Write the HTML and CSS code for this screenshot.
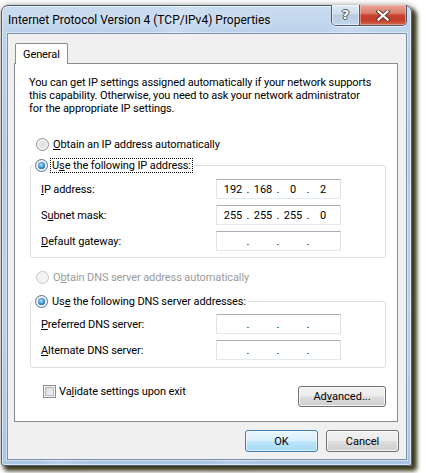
FILE: index.html
```html
<!DOCTYPE html>
<html>
<head>
<meta charset="utf-8">
<link rel="stylesheet" href="styles.css">
</head>
<body>
<div class="window">
  <div class="titlebar">
    <span class="title">Internet Protocol Version 4 (TCP/IPv4) Properties</span>
    <div class="caption-buttons">
      <div class="cbtn help"><span class="help-glyph">?</span></div>
      <div class="cbtn close">
        <svg width="14" height="11" viewBox="0 0 14 11">
          <path d="M2.5 1.5 L11.5 9.5 M11.5 1.5 L2.5 9.5" stroke="#5a3a3a" stroke-width="4" stroke-linecap="square" fill="none"/>
          <path d="M2.5 1.5 L11.5 9.5 M11.5 1.5 L2.5 9.5" stroke="#ffffff" stroke-width="2.2" stroke-linecap="square" fill="none"/>
        </svg>
      </div>
    </div>
  </div>
  <div class="client">
    <div class="tabs"><div class="tab">General</div></div>
    <div class="panel">
      <p class="intro">You can get IP settings assigned automatically if your network supports<br>this capability. Otherwise, you need to ask your network administrator<br>for the appropriate IP settings.</p>

      <div class="option row-obtain-ip"><span class="radio"></span><span><u>O</u>btain an IP address automatically</span></div>

      <fieldset class="group group-ip">
        <legend class="option"><span class="radio checked"></span><span class="focus">U<u>s</u>e the following IP address:</span></legend>
        <div class="field-row"><span class="label"><u>I</u>P address:</span>
          <div class="ip-input"><span class="octet">192</span><span class="dot">.</span><span class="octet">168</span><span class="dot">.</span><span class="octet">0</span><span class="dot">.</span><span class="octet">2</span></div>
        </div>
        <div class="field-row"><span class="label">S<u>u</u>bnet mask:</span>
          <div class="ip-input"><span class="octet">255</span><span class="dot">.</span><span class="octet">255</span><span class="dot">.</span><span class="octet">255</span><span class="dot">.</span><span class="octet">0</span></div>
        </div>
        <div class="field-row"><span class="label"><u>D</u>efault gateway:</span>
          <div class="ip-input"><span class="octet"></span><span class="dot">.</span><span class="octet"></span><span class="dot">.</span><span class="octet"></span><span class="dot">.</span><span class="octet"></span></div>
        </div>
      </fieldset>

      <div class="option disabled row-obtain-dns"><span class="radio disabled"></span><span>O<u>b</u>tain DNS server address automatically</span></div>

      <fieldset class="group group-dns">
        <legend class="option"><span class="radio checked"></span><span class="plain">Us<u>e</u> the following DNS server addresses:</span></legend>
        <div class="field-row"><span class="label"><u>P</u>referred DNS server:</span>
          <div class="ip-input"><span class="octet"></span><span class="dot">.</span><span class="octet"></span><span class="dot">.</span><span class="octet"></span><span class="dot">.</span><span class="octet"></span></div>
        </div>
        <div class="field-row"><span class="label"><u>A</u>lternate DNS server:</span>
          <div class="ip-input"><span class="octet"></span><span class="dot">.</span><span class="octet"></span><span class="dot">.</span><span class="octet"></span><span class="dot">.</span><span class="octet"></span></div>
        </div>
      </fieldset>

      <div class="bottom-row">
        <div class="check-option"><span class="checkbox"></span><span>Va<u>l</u>idate settings upon exit</span></div>
        <button class="btn btn-advanced">Ad<u>v</u>anced...</button>
      </div>
    </div>
    <div class="dialog-buttons">
      <button class="btn btn-default">OK</button>
      <button class="btn">Cancel</button>
    </div>
  </div>
</div>
</body>
</html>
```
FILE: styles.css
```css
* { box-sizing: border-box; }
html, body { margin: 0; padding: 0; background: #ffffff; }
body {
  width: 426px;
  height: 473px;
  overflow: hidden;
  font-family: Roboto, "Open Sans", sans-serif;
  font-size: 11px;
  line-height: 13px;
  letter-spacing: -0.1px;
  color: #000;
}
u { text-decoration: underline; text-decoration-thickness: 1px; text-underline-offset: 1px; }

.window {
  margin: 5px 0 0 1px;
  width: 411px;
  border: 1px solid #4d5d70;
  border-radius: 7px 7px 3px 3px;
  padding: 0 4px 5px 5px;
  background:
    linear-gradient(105deg, rgba(255,255,255,0) 30%, rgba(255,255,255,0.18) 34%, rgba(255,255,255,0) 40%, rgba(255,255,255,0) 62%, rgba(255,255,255,0.15) 66%, rgba(255,255,255,0) 72%),
    linear-gradient(to bottom, #cadcf0 0px, #bcd2eb 28px, #b0cae7 140px, #bad1ea 300px, #aac5e4 460px);
  box-shadow: inset 0 0 0 1px rgba(255,255,255,0.55), 4px 4px 4px 1px rgba(44,42,14,0.92), 0 0 6px rgba(0,0,0,0.35);
}

.titlebar {
  height: 27px;
  display: flex;
  align-items: flex-start;
  justify-content: space-between;
}
.title {
  padding: 8px 0 0 1px;
  font-size: 12px;
  letter-spacing: 0;
  white-space: nowrap;
  text-shadow: 0 0 6px rgba(255,255,255,0.8);
}
.caption-buttons {
  display: flex;
  margin-top: -1px;
  height: 21px;
  border: 1px solid #4b5a6c;
  border-top: none;
  border-radius: 0 0 5px 5px;
  overflow: hidden;
  box-shadow: 0 1px 0 rgba(255,255,255,0.6);
}
.cbtn {
  height: 20px;
  display: flex;
  align-items: center;
  justify-content: center;
}
.help {
  width: 28px;
  border-right: 1px solid #4b5a6c;
  background: linear-gradient(to bottom, #e3ebf5 0%, #cfdcec 45%, #b7cbe1 50%, #c3d5e9 100%);
  box-shadow: inset 0 0 0 1px rgba(255,255,255,0.5);
}
.help-glyph {
  font-family: "DejaVu Sans", sans-serif;
  font-weight: bold;
  font-size: 13px;
  line-height: 13px;
  letter-spacing: 0;
  color: #fff;
  margin-top: -1px;
  text-shadow: 0 0 1px #3b4a5c, 1px 0 0 #4d5c6e, -1px 0 0 #4d5c6e, 0 1px 0 #4d5c6e, 0 -1px 0 #4d5c6e;
}
.close {
  width: 46px;
  background: linear-gradient(to bottom, #e8a596 0%, #dc7f6c 40%, #c8442e 52%, #c23b25 75%, #d46b51 100%);
  box-shadow: inset 0 0 0 1px rgba(255,210,200,0.45);
}

.client {
  width: 400px;
  height: 427px;
  border: 1px solid #7b8fa8;
  background: #f0f0f0;
  display: flex;
  flex-direction: column;
  box-shadow: 0 0 0 1px rgba(255,255,255,0.45);
}

.tabs {
  padding: 9px 0 0 6px;
  display: flex;
}
.tab {
  position: relative;
  z-index: 1;
  margin-left: 1px;
  margin-bottom: -1px;
  width: 53px;
  height: 21px;
  border: 1px solid #898c95;
  border-bottom: none;
  border-radius: 2px 2px 0 0;
  background: #fff;
  padding: 4px 0 0 7px;
}

.panel {
  margin-left: 6px;
  width: 384px;
  height: 359px;
  border: 1px solid #898c95;
  background: #fff;
  padding: 0 11px 0 0;
}
.intro {
  margin: 12px 0 0 14px;
  white-space: nowrap;
}

.option {
  display: flex;
  align-items: center;
  height: 13px;
  white-space: nowrap;
}
.row-obtain-ip { margin: 23px 0 0 21px; }
.row-obtain-dns { margin: 13px 0 0 21px; }
.disabled { color: #9a9a9a; }

.radio {
  flex: none;
  position: relative;
  width: 13px;
  height: 13px;
  margin-right: 4px;
  border-radius: 50%;
  border: 1px solid #8f9091;
  background: radial-gradient(circle at 50% 50%, #dcdcdc 0%, #e9e9e9 45%, #f7f7f7 70%, #e3e3e3 100%);
}
.radio.checked { border-color: #546e8a; }
.radio.checked::after {
  content: "";
  position: absolute;
  left: 2px;
  top: 2px;
  width: 7px;
  height: 7px;
  border-radius: 50%;
  background: radial-gradient(circle at 45% 40%, #b9e6fd 0%, #5ab0e6 35%, #1f6aa6 70%, #0f3e69 100%);
}
.radio.disabled {
  border-color: #c8c8c8;
  background: #f3f3f3;
}

.group {
  margin: 8px 0 0 15px;
  padding: 7px 0 6px 10px;
  border: 1px solid #d5dfe5;
  border-radius: 3px;
  min-width: 0;
}
.group-dns { margin-top: 11px; padding-top: 6px; padding-bottom: 7px; }
.group legend {
  margin-left: -8px;
  padding: 0 2px;
}
.focus {
  margin-left: -1px;
  padding: 0 1px;
  outline: 1px dotted #000;
  outline-offset: 0;
}
.plain { margin-left: 0; }

.field-row {
  display: flex;
  align-items: center;
  height: 20px;
}
.field-row + .field-row { margin-top: 6px; }
.label {
  width: 175px;
  flex: none;
}
.ip-input {
  width: 125px;
  height: 20px;
  display: flex;
  align-items: center;
  padding-left: 2px;
  background: #fff;
  border: 1px solid;
  border-color: #abadb3 #dbdfe6 #e3e9ef #e2e3ea;
}
.octet {
  width: 28px;
  text-align: center;
  letter-spacing: 0;
}
.dot {
  width: 2px;
  display: flex;
  justify-content: center;
}

.bottom-row {
  margin: 17px 0 0 28px;
  display: flex;
  justify-content: space-between;
  align-items: flex-start;
}
.check-option {
  display: flex;
  align-items: center;
  height: 13px;
}
.checkbox {
  width: 13px;
  height: 13px;
  margin-right: 3px;
  border: 1px solid #8f8f8f;
  background: linear-gradient(135deg, #cdd0d4 0%, #e6e7e9 50%, #f6f6f6 100%);
  box-shadow: inset 0 0 0 1px #f4f4f4, inset 0 0 0 2px #b9bdc2;
}

.btn {
  font-family: inherit;
  font-size: 11px;
  line-height: 13px;
  color: #000;
  height: 22px;
  padding: 0;
  border: 1px solid #707070;
  border-radius: 3px;
  background: linear-gradient(to bottom, #f2f2f2 0%, #ebebeb 48%, #dddddd 52%, #cfcfcf 100%);
  box-shadow: inset 0 0 0 1px rgba(255,255,255,0.75);
}
.btn-advanced {
  width: 88px;
  height: 21px;
  margin-top: 1px;
}
.btn-default {
  border-color: #3c7fb1;
  background: linear-gradient(to bottom, #eaf6fd 0%, #d9f0fc 48%, #bee6fd 52%, #a7d9f5 100%);
  box-shadow: inset 0 0 0 1px rgba(255,255,255,0.6);
}

.dialog-buttons {
  margin-top: 8px;
  display: flex;
  justify-content: flex-end;
  gap: 8px;
  padding-right: 7px;
}
.dialog-buttons .btn { width: 73px; }
```
